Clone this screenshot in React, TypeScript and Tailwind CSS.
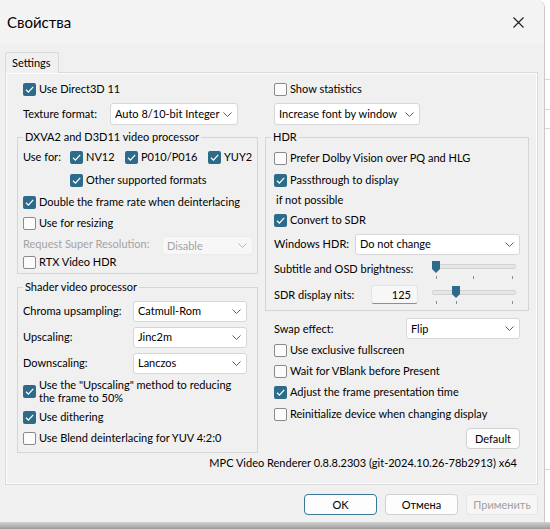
import React from "react";

function Box({ checked }: { checked?: boolean }) {
  if (checked) {
    return (
      <div className="w-[13px] h-[13px] shrink-0 rounded-[2px] bg-[#2c6b89] flex items-center justify-center">
        <svg width="13" height="13" viewBox="0 0 13 13">
          <path d="M3 6.8 L5.4 9.1 L10.2 3.9" fill="none" stroke="#ffffff" strokeWidth="1.3" />
        </svg>
      </div>
    );
  }
  return <div className="w-[13px] h-[13px] shrink-0 rounded-[2px] border border-[#8a8a8a] bg-[#fbfbfb]" />;
}

function Check({ checked, children, className }: { checked?: boolean; children: React.ReactNode; className?: string }) {
  return (
    <div className={"flex items-center " + (className || "")}>
      <Box checked={checked} />
      <span className="ml-[3px] whitespace-nowrap">{children}</span>
    </div>
  );
}

function Chevron({ color = "#5f5f5f" }: { color?: string }) {
  return (
    <svg width="9" height="5" viewBox="0 0 9 5" className="shrink-0">
      <path d="M0.5 0.5 L4.5 4.5 L8.5 0.5" fill="none" stroke={color} strokeWidth="1" />
    </svg>
  );
}

function Select({ value, className, disabled }: { value: string; className: string; disabled?: boolean }) {
  return (
    <div
      className={
        "flex items-center justify-between rounded-[3px] border pl-[4px] pr-[5px] shrink-0 " +
        (disabled ? "bg-[#f7f7f7] border-[#ebebeb] text-[#a3a3a3] " : "bg-white border-[#d6d6d6] ") +
        className
      }
    >
      <span className="whitespace-nowrap">{value}</span>
      <Chevron color={disabled ? "#b5b5b5" : "#5f5f5f"} />
    </div>
  );
}

function Slider({ thumb, ticks, trackY, thumbTop, tickTop }: { thumb: number; ticks: number[]; trackY: number; thumbTop: number; tickTop: number }) {
  return (
    <svg width="86" height="27" viewBox="0 0 86 27" className="shrink-0">
      <rect x="0.5" y={trackY - 2 + 0.5} width="83" height="4" fill="#e6e6e6" stroke="#d2d2d2" strokeWidth="1" rx="1" />
      {ticks.map((t) => (
        <rect key={t} x={t} y={tickTop} width="1" height="3" fill="#8c8c8c" />
      ))}
      <path
        d={`M${thumb} ${thumbTop} H${thumb + 8} V${thumbTop + 8} L${thumb + 4} ${thumbTop + 12} L${thumb} ${thumbTop + 8} Z`}
        fill="#2c6b89"
      />
    </svg>
  );
}

function Btn({ children, className }: { children: React.ReactNode; className: string }) {
  return (
    <div className={"flex items-center justify-center rounded-[4px] border " + className}>{children}</div>
  );
}

export default function App() {
  return (
    <div className="w-[550px] h-[529px] overflow-hidden flex flex-col bg-white font-['Lato',sans-serif] text-[11px] leading-[16px] text-black">
      <div className="flex h-[522px] shrink-0">
        {/* Dialog */}
        <div className="w-[545px] h-[522px] flex flex-col rounded-tr-[8px] border-r border-[#c9c9c9] bg-[#f0f0f0] overflow-hidden">
          {/* Title bar */}
          <div className="h-[44px] shrink-0 bg-[#f3f3f3] flex items-center justify-between pl-[7px] pr-[20px]">
            <span className="text-[15px] leading-[20px]">Свойства</span>
            <svg width="11" height="11" viewBox="0 0 11 11">
              <path d="M0.5 0.5 L10.5 10.5 M10.5 0.5 L0.5 10.5" stroke="#1b1b1b" strokeWidth="1.1" />
            </svg>
          </div>
          {/* Body */}
          <div className="flex flex-col pt-[8px] pl-[5px] pr-[6px]">
            {/* Tab header */}
            <div className="flex h-[20px] shrink-0">
              <div className="relative z-10 w-[54px] h-[21px] border border-b-0 border-[#dadada] bg-[#f0f0f0] pl-[6px] pt-[2px] rounded-t-[2px]">
                Settings
              </div>
            </div>
            {/* Panel */}
            <div className="border border-[#dadada] shadow-[inset_1px_1px_0_#fcfcfc,inset_-1px_-1px_0_#fcfcfc] bg-[#f0f0f0] flex flex-col shrink-0">
              <div className="h-[381px] shrink-0 flex pl-[11px] pr-[8px] gap-[7px]">
                {/* Left column */}
                <div className="w-[242px] flex flex-col">
                  <div className="pl-[6px] mt-[6px] h-[20px] shrink-0 flex items-center">
                    <Check checked>Use Direct3D 11</Check>
                  </div>
                  <div className="mt-[4px] h-[22px] shrink-0 pl-[6px] flex items-center">
                    <span className="w-[87px] whitespace-nowrap">Texture format:</span>
                    <Select value="Auto 8/10-bit Integer" className="w-[128px] h-[22px]" />
                  </div>
                  <fieldset className="mt-[4px] shrink-0 border border-[#d5d5d5] pl-[5px] pb-[4px]">
                    <legend className="px-[2px] leading-[16px]">DXVA2 and D3D11 video processor</legend>
                    <div className="h-[24px] flex items-center">
                      <span className="w-[47px]">Use for:</span>
                      <Check checked className="w-[55px]">NV12</Check>
                      <Check checked className="w-[83px]">P010/P016</Check>
                      <Check checked>YUY2</Check>
                    </div>
                    <div className="h-[22px] flex items-center pl-[47px]">
                      <Check checked>Other supported formats</Check>
                    </div>
                    <div className="h-[22px] flex items-center">
                      <Check checked>Double the frame rate when deinterlacing</Check>
                    </div>
                    <div className="h-[20px] flex items-center">
                      <Check>Use for resizing</Check>
                    </div>
                    <div className="h-[22px] flex items-center">
                      <span className="w-[139px] text-[#a3a3a3] whitespace-nowrap">Request Super Resolution:</span>
                      <Select value="Disable" disabled className="w-[91px] h-[19px] mt-[3px]" />
                    </div>
                    <div className="h-[14px] flex items-center">
                      <Check>RTX Video HDR</Check>
                    </div>
                  </fieldset>
                  <fieldset className="mt-[5px] shrink-0 border border-[#d5d5d5] pl-[5px] pt-[3px] pb-[4px]">
                    <legend className="px-[2px] leading-[16px]">Shader video processor</legend>
                    <div className="h-[26px] flex items-center">
                      <span className="w-[110px]">Chroma upsampling:</span>
                      <Select value="Catmull-Rom" className="w-[114px] h-[21px]" />
                    </div>
                    <div className="h-[26px] flex items-center">
                      <span className="w-[110px]">Upscaling:</span>
                      <Select value="Jinc2m" className="w-[114px] h-[21px]" />
                    </div>
                    <div className="h-[26px] flex items-center">
                      <span className="w-[110px]">Downscaling:</span>
                      <Select value="Lanczos" className="w-[114px] h-[21px]" />
                    </div>
                    <div className="h-[30px] flex items-center">
                      <Box checked />
                      <span className="ml-[3px] leading-[13px]">
                        Use the "Upscaling" method to reducing
                        <br />
                        the frame to 50%
                      </span>
                    </div>
                    <div className="h-[22px] flex items-center">
                      <Check checked>Use dithering</Check>
                    </div>
                    <div className="h-[20px] flex items-center">
                      <Check>Use Blend deinterlacing for YUV 4:2:0</Check>
                    </div>
                  </fieldset>
                </div>
                {/* Right column */}
                <div className="w-[264px] flex flex-col">
                  <div className="pl-[9px] mt-[6px] h-[20px] shrink-0 flex items-center">
                    <Check>Show statistics</Check>
                  </div>
                  <div className="mt-[4px] h-[22px] shrink-0 pl-[9px] flex items-center">
                    <Select value="Increase font by window" className="w-[146px] h-[22px]" />
                  </div>
                  <fieldset className="mt-[4px] shrink-0 border border-[#d5d5d5] pl-[8px] pr-[8px] pt-[3px] pb-[2px]">
                    <legend className="ml-[-3px] px-[2px] leading-[16px]">HDR</legend>
                    <div className="h-[20px] flex items-center">
                      <Check>Prefer Dolby Vision over PQ and HLG</Check>
                    </div>
                    <div className="mt-[1px] h-[22px] flex items-center">
                      <Check checked>Passthrough to display</Check>
                    </div>
                    <div className="h-[18px] flex items-center pl-[2px]">if not possible</div>
                    <div className="h-[22px] flex items-center">
                      <Check checked>Convert to SDR</Check>
                    </div>
                    <div className="h-[26px] flex items-center">
                      <span className="w-[81px] whitespace-nowrap">Windows HDR:</span>
                      <Select value="Do not change" className="w-[165px] h-[21px]" />
                    </div>
                    <div className="h-[24px] flex items-center">
                      <span className="w-[158px] whitespace-nowrap">Subtitle and OSD brightness:</span>
                      <div className="h-[24px] w-[86px] flex items-start">
                        <Slider thumb={0} ticks={[4, 41, 80]} trackY={9} thumbTop={4} tickTop={19} />
                      </div>
                    </div>
                    <div className="h-[27px] flex items-center">
                      <span className="w-[97px] whitespace-nowrap">SDR display nits:</span>
                      <div className="w-[47px] h-[19px] bg-[#f7f7f7] border border-[#e3e3e3] border-b-[#8f8f8f] rounded-[3px] flex items-center justify-end pr-[6px]">
                        125
                      </div>
                      <div className="ml-[14px] h-[27px] w-[86px] flex items-start">
                        <Slider thumb={20} ticks={[4, 24, 80]} trackY={11} thumbTop={5} tickTop={20} />
                      </div>
                    </div>
                  </fieldset>
                  <div className="mt-[7px] h-[21px] shrink-0 pl-[9px] flex items-center">
                    <span className="w-[132px]">Swap effect:</span>
                    <Select value="Flip" className="w-[114px] h-[21px]" />
                  </div>
                  <div className="mt-[1px] h-[20px] shrink-0 pl-[9px] flex items-center">
                    <Check>Use exclusive fullscreen</Check>
                  </div>
                  <div className="mt-[1px] h-[20px] shrink-0 pl-[9px] flex items-center">
                    <Check>Wait for VBlank before Present</Check>
                  </div>
                  <div className="mt-[1px] h-[20px] shrink-0 pl-[9px] flex items-center">
                    <Check checked>Adjust the frame presentation time</Check>
                  </div>
                  <div className="mt-[2px] h-[20px] shrink-0 pl-[9px] flex items-center">
                    <Check>Reinitialize device when changing display</Check>
                  </div>
                  <div className="mt-[4px] shrink-0 flex justify-end pr-[9px]">
                    <Btn className="w-[54px] h-[21px] bg-[#fdfdfd] border-[#d0d0d0]">Default</Btn>
                  </div>
                </div>
              </div>
              <div className="h-[18px] shrink-0 flex items-center justify-end pr-[20px] whitespace-nowrap">
                MPC Video Renderer 0.8.8.2303 (git-2024.10.26-78b2913) x64
              </div>
              <div className="h-[12px] shrink-0" />
            </div>
            {/* Buttons */}
            <div className="mt-[9px] flex justify-end gap-[8px] shrink-0">
              <Btn className="w-[73px] h-[21px] bg-[#fdfdfd] border-[#3a7697]">OK</Btn>
              <Btn className="w-[73px] h-[21px] bg-[#fdfdfd] border-[#d0d0d0]">Отмена</Btn>
              <Btn className="w-[72px] h-[21px] bg-[#f6f6f6] border-[#e6e6e6] text-[#a0a0a0]">Применить</Btn>
            </div>
          </div>
        </div>
        {/* Background window strip */}
        <div className="flex-1 flex flex-col bg-white">
          <div className="h-[79px]" />
          <div className="h-px bg-[#d6d6d6]" />
          <div className="h-[29px]" />
          <div className="h-px bg-[#d6d6d6]" />
          <div className="h-[18px]" />
          <div className="h-px bg-[#d6d6d6]" />
          <div className="h-[340px]" />
          <div className="h-px bg-[#d6d6d6]" />
        </div>
      </div>
      <div className="flex-1 bg-gradient-to-b from-[#d2d2d2] to-[#9c9c9c]" />
    </div>
  );
}
